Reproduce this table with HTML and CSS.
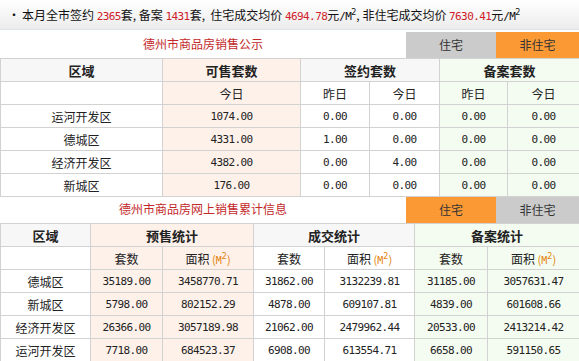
FILE: index.html
```html
<!DOCTYPE html>
<html lang="zh-CN">
<head>
  <meta charset="UTF-8" />
  <title>德州市商品房销售公示</title>
  <link rel="stylesheet" href="styles.css">
</head>
<body>
  <!-- Month summary -->
  <div class="topbar">
    <span class="dot">·</span>本月全市签约 <span class="num red">2365</span>套, 备案 <span class="num red">1431</span>套, &nbsp;住宅成交均价 <span class="num red">4694.78</span>元<span class="num">/M</span><sup>2</sup>, 非住宅成交均价 <span class="num red">7630.41</span>元<span class="num">/M</span><sup>2</sup>
  </div>

  <!-- Daily table -->
  <div class="titlebar">
    <div class="title">德州市商品房销售公示</div>
    <div class="tab grey">住宅</div>
    <div class="tab orange wide">非住宅</div>
  </div>
  <table class="grid daily">
    <colgroup>
      <col style="width:162px"><col style="width:138px"><col style="width:69px">
      <col style="width:70px"><col style="width:68px"><col style="width:72px">
    </colgroup>
    <tr class="head">
      <th>区域</th>
      <th class="peach">可售套数</th>
      <th colspan="2">签约套数</th>
      <th colspan="2" class="green">备案套数</th>
    </tr>
    <tr class="sub">
      <td></td>
      <td class="peach">今日</td>
      <td>昨日</td><td>今日</td>
      <td class="green">昨日</td><td class="green">今日</td>
    </tr>
    <tr>
      <td>运河开发区</td><td class="peach num">1074.00</td>
      <td class="num">0.00</td><td class="num">0.00</td>
      <td class="green num">0.00</td><td class="green num">0.00</td>
    </tr>
    <tr>
      <td>德城区</td><td class="peach num">4331.00</td>
      <td class="num">1.00</td><td class="num">0.00</td>
      <td class="green num">0.00</td><td class="green num">0.00</td>
    </tr>
    <tr>
      <td>经济开发区</td><td class="peach num">4382.00</td>
      <td class="num">0.00</td><td class="num">4.00</td>
      <td class="green num">0.00</td><td class="green num">0.00</td>
    </tr>
    <tr>
      <td>新城区</td><td class="peach num">176.00</td>
      <td class="num">0.00</td><td class="num">0.00</td>
      <td class="green num">0.00</td><td class="green num">0.00</td>
    </tr>
  </table>

  <!-- Cumulative table -->
  <div class="titlebar second">
    <div class="title">德州市商品房网上销售累计信息</div>
    <div class="tab orange">住宅</div>
    <div class="tab grey wide">非住宅</div>
  </div>
  <table class="grid total">
    <colgroup>
      <col style="width:90px"><col style="width:72px"><col style="width:91px">
      <col style="width:71px"><col style="width:90px"><col style="width:73px"><col style="width:92px">
    </colgroup>
    <tr class="head">
      <th>区域</th>
      <th colspan="2" class="peach">预售统计</th>
      <th colspan="2">成交统计</th>
      <th colspan="2" class="green">备案统计</th>
    </tr>
    <tr class="sub">
      <td></td>
      <td class="peach">套数</td><td class="peach">面积 <span class="unit">(<span class="num">M</span><sup>2</sup>)</span></td>
      <td>套数</td><td>面积 <span class="unit">(<span class="num">M</span><sup>2</sup>)</span></td>
      <td class="green">套数</td><td class="green">面积 <span class="unit">(<span class="num">M</span><sup>2</sup>)</span></td>
    </tr>
    <tr>
      <td>德城区</td>
      <td class="peach num">35189.00</td><td class="peach num">3458770.71</td>
      <td class="num">31862.00</td><td class="num">3132239.81</td>
      <td class="green num">31185.00</td><td class="green num">3057631.47</td>
    </tr>
    <tr>
      <td>新城区</td>
      <td class="peach num">5798.00</td><td class="peach num">802152.29</td>
      <td class="num">4878.00</td><td class="num">609107.81</td>
      <td class="green num">4839.00</td><td class="green num">601608.66</td>
    </tr>
    <tr>
      <td>经济开发区</td>
      <td class="peach num">26366.00</td><td class="peach num">3057189.98</td>
      <td class="num">21062.00</td><td class="num">2479962.44</td>
      <td class="green num">20533.00</td><td class="green num">2413214.42</td>
    </tr>
    <tr>
      <td>运河开发区</td>
      <td class="peach num">7718.00</td><td class="peach num">684523.37</td>
      <td class="num">6908.00</td><td class="num">613554.71</td>
      <td class="green num">6658.00</td><td class="green num">591150.65</td>
    </tr>
  </table>
</body>
</html>
```

FILE: styles.css
```css
* {
  margin: 0;
  padding: 0;
  box-sizing: border-box;
}

body {
  background: #fff;
  color: #222;
  font-family: "Noto Sans CJK SC", "DejaVu Sans", sans-serif;
  font-size: 12px;
  width: 579px;
}

.num {
  font-family: "DejaVu Sans Mono", "Liberation Mono", monospace;
  font-size: 11px;
  letter-spacing: -0.6px;
}

.red {
  color: #d0202a;
}

sup {
  font-family: "DejaVu Sans", sans-serif;
  font-size: 8px;
  vertical-align: 5px;
  line-height: 0;
}

/* Summary bar */
.topbar {
  height: 30px;
  line-height: 29px;
  padding-left: 8px;
  background: linear-gradient(#ffffff, #ececec);
  border-bottom: 1px solid #dce5ee;
  white-space: nowrap;
  color: #111;
}

.topbar .dot {
  margin-right: 2px;
}

/* Title + tabs */
.titlebar {
  display: flex;
  height: 26px;
  margin-top: 2px;
}

.titlebar.second {
  margin-top: 0;
}

.title {
  flex: 1;
  text-align: center;
  line-height: 24px;
  color: #c3292b;
}

.tab {
  width: 90px;
  text-align: center;
  line-height: 26px;
  color: #333;
}

.tab.wide {
  width: 83px;
}

.tab.grey {
  background: #cbcbcb;
}

.tab.orange {
  background: #fb9a35;
}

/* Tables */
.grid {
  width: 579px;
  table-layout: fixed;
  border-collapse: collapse;
}

.grid th,
.grid td {
  height: 23px;
  border: 1px solid #d2d2d2;
  text-align: center;
  white-space: nowrap;
  color: #222;
  padding: 0;
}

.grid th {
  font-size: 13px;
  background: #f7f7f7;
}

.grid .peach {
  background: #fdf1ea;
}

.grid .green {
  background: #f4fbf0;
}

.unit {
  color: #e4830c;
  font-size: 11px;
}

.unit .num {
  font-size: 10px;
  letter-spacing: 0;
}
```
